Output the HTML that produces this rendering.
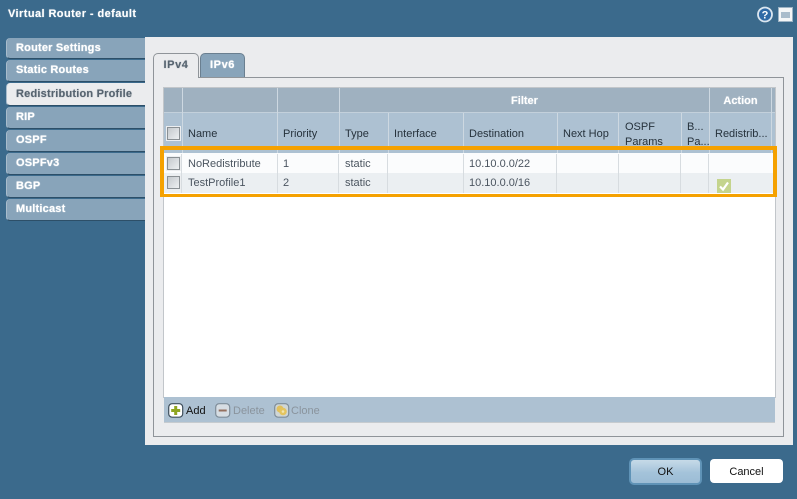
<!DOCTYPE html>
<html><head><meta charset="utf-8"><style>
html,body{margin:0;padding:0}
body{width:797px;height:499px;overflow:hidden;position:relative;background:#3b6a8c;font-family:"Liberation Sans",sans-serif;font-size:11px;color:#333}
div{position:absolute;box-sizing:border-box;white-space:nowrap}
.side{left:6px;width:139px;background:#88a4ba;border-radius:4px 0 0 4px;border-bottom:1px solid #2d4f68;border-left:1px solid #a8bccc;color:#fff;font-weight:bold;font-size:11px;padding-left:9px;letter-spacing:.2px;text-shadow:0 0 1px #fff}
.hd{top:88px;height:24px;background:#9fb1c0;color:#fff;font-weight:bold;text-align:center;line-height:27px;text-shadow:0 0 1px #dfe6ec}
.vl{width:1px;background:#cdd8e1}
.vr{width:1px;background:#d7dce0;top:154px;height:39px}
.cb{width:13px;height:13px;background:linear-gradient(135deg,#c4c9cd,#eef0f2);border:1px solid #8a9094;box-shadow:0 0 0 1px #eceef0}
.t{color:#4b5560;line-height:21px;height:19px}
.h{top:128px;color:#26323c}
.tool{top:397px;height:26px;line-height:29px;color:#8a949d}
</style></head><body>
<div style="left:8px;top:8px;color:#fff;font-weight:bold;font-size:11px;letter-spacing:.42px;text-shadow:0 0 1px #c9d6e0">Virtual Router - default</div>

<svg style="position:absolute;left:756px;top:6px" width="18" height="18" viewBox="0 0 18 18"><circle cx="9" cy="8.500" r="7" fill="#2f6aa6" stroke="#dbe6ef" stroke-width="1.800"/><text x="9" y="12.500" text-anchor="middle" font-family="Liberation Sans" font-weight="bold" font-size="11" fill="#fff">?</text></svg>
<div style="left:778px;top:7px;width:15px;height:15px;background:#f4f6f7;border:1px solid #9db3c4"></div>
<div style="left:781px;top:12px;width:9px;height:6px;background:#a9bccb"></div>

<div class="side" style="top:38px;height:21px;line-height:20px">Router Settings</div>
<div class="side" style="top:60px;height:22px;line-height:21px">Static Routes</div>
<div class="side" style="top:83px;height:23px;line-height:21px;background:#ebecee;color:#56636f;text-shadow:0 0 1px #8d98a2;width:140px;padding-top:1px">Redistribution Profile</div>
<div class="side" style="top:107px;height:22px;line-height:20px">RIP</div>
<div class="side" style="top:130px;height:22px;line-height:21px">OSPF</div>
<div class="side" style="top:153px;height:22px;line-height:21px">OSPFv3</div>
<div class="side" style="top:176px;height:22px;line-height:21px">BGP</div>
<div class="side" style="top:199px;height:22px;line-height:21px">Multicast</div>

<div style="left:145px;top:37px;width:648px;height:408px;background:#ebecee"></div>
<div style="left:153px;top:77px;width:631px;height:360px;border:1px solid #8f9499;background:#ebecee"></div>
<div style="left:153px;top:53px;width:46px;height:25px;background:#ebecee;border:1px solid #8f9499;border-bottom:none;border-radius:5px 5px 0 0;color:#56636f;font-weight:bold;line-height:23px;text-align:center;letter-spacing:.6px;text-shadow:0 0 1px #8d98a2">IPv4</div>
<div style="left:200px;top:53px;width:45px;height:24px;background:#88a4ba;border:1px solid #6a7f90;border-bottom:none;border-radius:5px 5px 0 0;color:#fff;font-weight:bold;line-height:22px;text-align:center;letter-spacing:.6px;text-shadow:0 0 1px #fff">IPv6</div>

<div style="left:163px;top:87px;width:613px;height:311px;background:#fff;border:1px solid #c2c6ca"></div>
<div style="left:164px;top:88px;width:611px;height:24px;background:#9fb1c0"></div>
<div style="left:164px;top:113px;width:611px;height:40px;background:#adc1d2"></div>
<div style="left:164px;top:112px;width:611px;height:1px;background:#c3d0db"></div>
<div style="left:164px;top:153px;width:611px;height:20px;background:#fbfcfd"></div>
<div style="left:164px;top:173px;width:611px;height:20px;background:#ebeff2"></div>

<div class="hd" style="left:340px;width:369px">Filter</div>
<div class="hd" style="left:710px;width:61px">Action</div>

<div class="vl" style="left:182px;top:88px;height:65px"></div>
<div class="vl" style="left:277px;top:88px;height:65px"></div>
<div class="vl" style="left:339px;top:88px;height:65px"></div>
<div class="vl" style="left:709px;top:88px;height:65px"></div>
<div class="vl" style="left:771px;top:88px;height:65px"></div>
<div class="vl" style="left:388px;top:113px;height:40px"></div>
<div class="vl" style="left:463px;top:113px;height:40px"></div>
<div class="vl" style="left:557px;top:113px;height:40px"></div>
<div class="vl" style="left:618px;top:113px;height:40px"></div>
<div class="vl" style="left:681px;top:113px;height:40px"></div>

<div class="vr" style="left:181px"></div><div class="vr" style="left:277px"></div><div class="vr" style="left:338px"></div><div class="vr" style="left:387px"></div><div class="vr" style="left:463px"></div><div class="vr" style="left:556px"></div><div class="vr" style="left:618px"></div><div class="vr" style="left:680px"></div><div class="vr" style="left:708px"></div>

<div class="cb" style="left:167px;top:127px"></div>
<div class="h" style="left:188px">Name</div>
<div class="h" style="left:283px">Priority</div>
<div class="h" style="left:345px">Type</div>
<div class="h" style="left:394px">Interface</div>
<div class="h" style="left:469px">Destination</div>
<div class="h" style="left:563px">Next Hop</div>
<div style="left:625px;top:120px;color:#26323c;line-height:15px">OSPF<br>Params</div>
<div style="left:687px;top:120px;color:#26323c;line-height:15px">B...<br>Pa...</div>
<div class="h" style="left:715px">Redistrib...</div>

<div class="cb" style="left:167px;top:157px"></div>
<div class="cb" style="left:167px;top:176px"></div>
<div class="t" style="left:188px;top:154px">NoRedistribute</div>
<div class="t" style="left:283px;top:154px">1</div>
<div class="t" style="left:345px;top:154px">static</div>
<div class="t" style="left:469px;top:154px">10.10.0.0/22</div>
<div class="t" style="left:188px;top:173px">TestProfile1</div>
<div class="t" style="left:283px;top:173px">2</div>
<div class="t" style="left:345px;top:173px">static</div>
<div class="t" style="left:469px;top:173px">10.10.0.0/16</div>

<svg style="position:absolute;left:717px;top:179px" width="14" height="14" viewBox="0 0 14 14"><rect width="14" height="14" fill="#c4d48d"/><path d="M3 7.500L6 10.500L11 3.500" fill="none" stroke="#fff" stroke-width="2.200"/></svg>

<div style="left:160px;top:146px;width:617px;height:51px;border:4px solid #f5a100;border-bottom-width:3px"></div>

<div style="left:164px;top:397px;width:611px;height:26px;background:#adc1d2;border-bottom:1px solid #c6cbcf"></div>
<svg style="position:absolute;left:168px;top:403px" width="16" height="15" viewBox="0 0 16 15"><rect x=".7" y=".7" width="14" height="13.500" rx="3.500" fill="#fff" stroke="#3f4f5c" stroke-width="1.200"/><path d="M7.700 3v9M3.200 7.500h9" stroke="#8fa521" stroke-width="3"/></svg>
<div class="tool" style="left:186px;color:#111">Add</div>
<svg style="position:absolute;left:215px;top:403px" width="16" height="15" viewBox="0 0 16 15"><rect x=".7" y=".7" width="14" height="13.500" rx="3.500" fill="#d6dde3" stroke="#7f8d99" stroke-width="1.200"/><path d="M3.700 7.500h8" stroke="#94705f" stroke-width="2"/></svg>
<div class="tool" style="left:233px">Delete</div>
<svg style="position:absolute;left:274px;top:403px" width="16" height="15" viewBox="0 0 16 15"><rect x=".7" y=".7" width="14" height="13.500" rx="3.500" fill="#cfd6d6" stroke="#7f8d99" stroke-width="1.200"/><circle cx="6" cy="6" r="3.500" fill="#e0c05e"/><circle cx="9" cy="8.500" r="3.800" fill="#e3c45f"/><circle cx="9" cy="8.500" r="1.300" fill="#f3e6b0"/></svg>
<div class="tool" style="left:291px">Clone</div>

<div style="left:629px;top:458px;width:73px;height:27px;border-radius:5px;background:linear-gradient(#c6dae8,#a4c3da 55%,#9bbcd5);border:2px solid #5f93b7;color:#111;text-align:center;line-height:25px">OK</div>
<div style="left:710px;top:459px;width:73px;height:24px;border-radius:4px;background:#fff;color:#111;text-align:center;line-height:26px">Cancel</div>
</body></html>
